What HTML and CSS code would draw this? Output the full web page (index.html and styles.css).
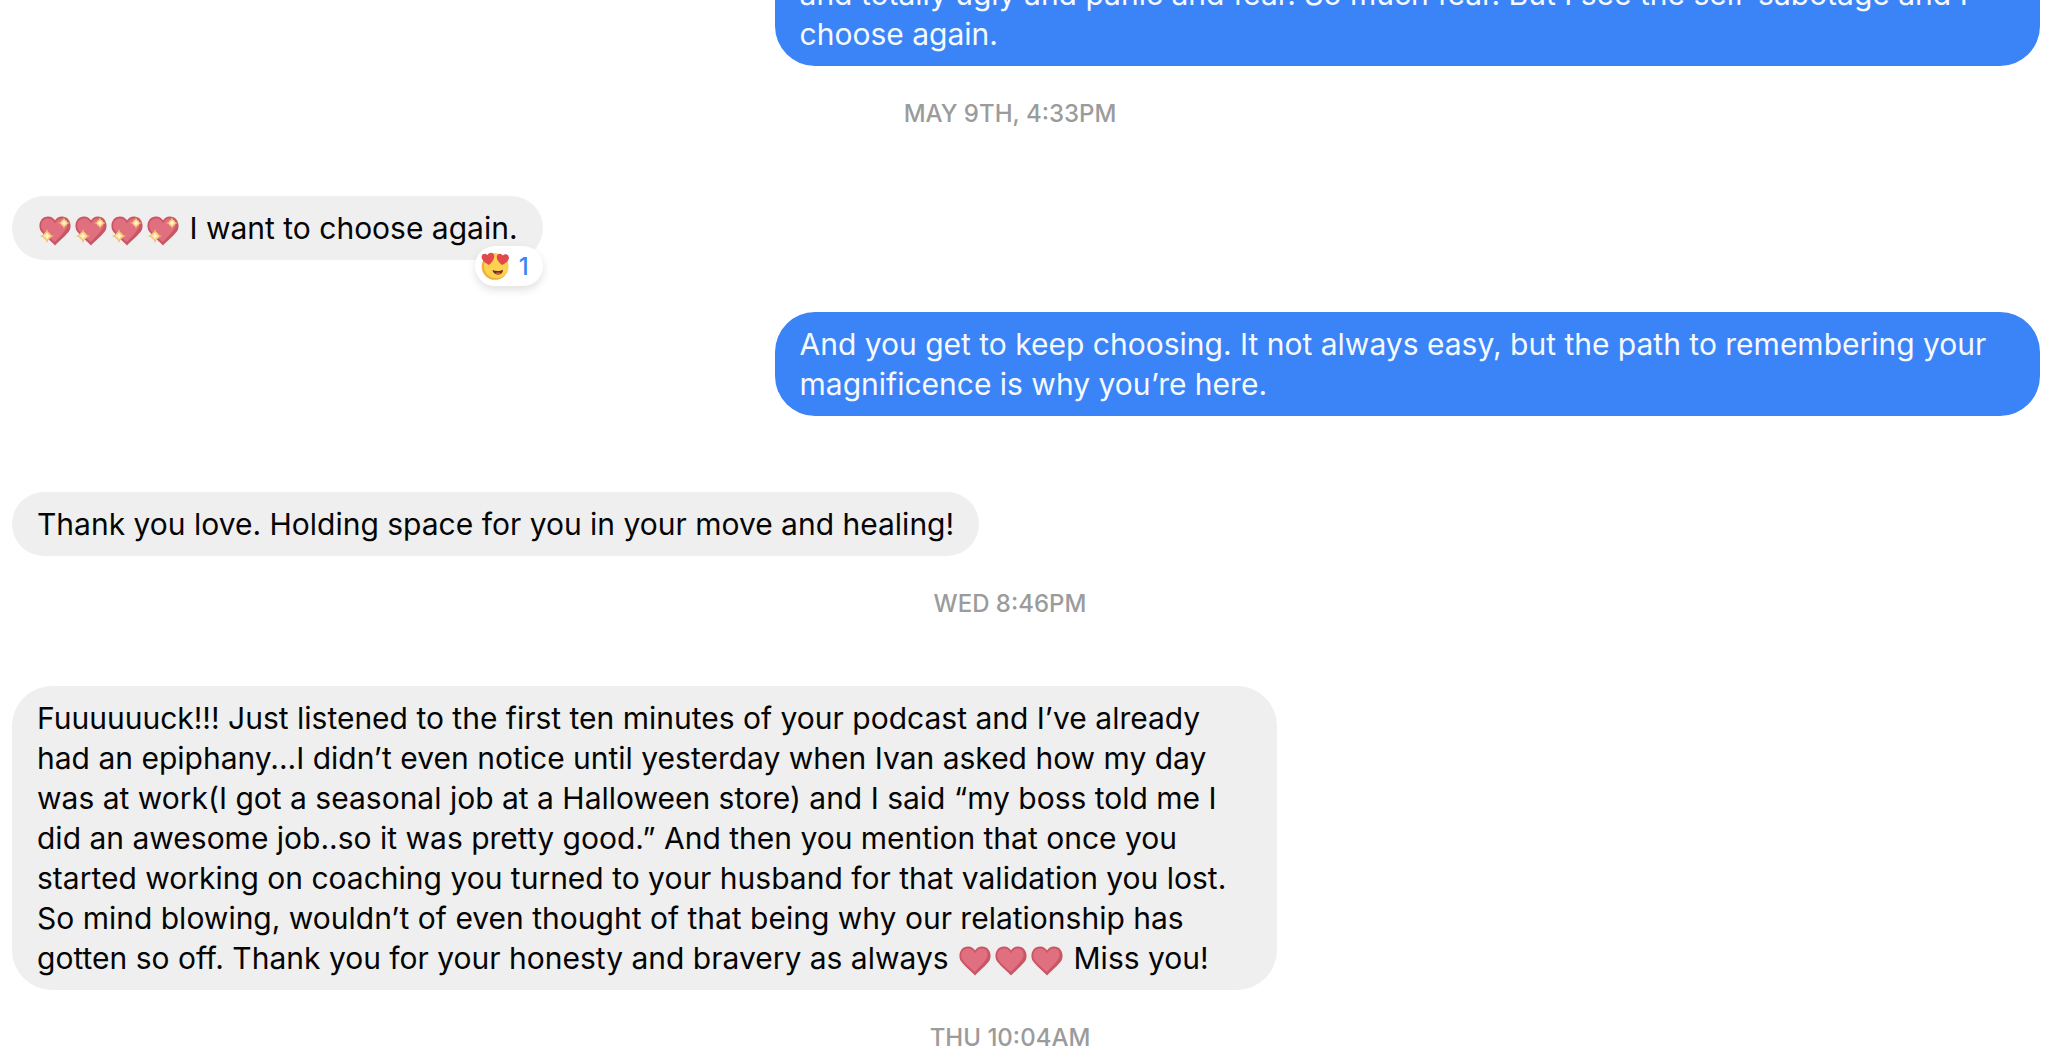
FILE: index.html
```html
<!DOCTYPE html>
<html lang="en">
<head>
    <meta charset="UTF-8">
    <meta name="viewport" content="width=device-width, initial-scale=1.0">
    <title>Messages</title>
    <link rel="stylesheet" href="styles.css">
</head>
<body>
    <!-- shared emoji shapes -->
    <svg class="sprites" aria-hidden="true">
      <symbol id="heart" viewBox="0 0 32 30">
        <path fill="#cb5565" d="M16 29.500 C14 27 3 18 1 13.500 C-1 7 2.500 .5 9 .5 C12.500 .5 15 2.500 16 4.500 C17 2.500 19.500 .5 23 .5 C29.500 .5 33 7 31 13.500 C29 18 18 27 16 29.500Z"/>
        <path fill="#e0707f" d="M16 26 C11 22 4 16 2.500 12 C1.200 7 4 3 8.500 2.600 C12.500 2.300 14.500 4.500 16 7.500 C17.500 4.500 19.500 2.300 23.500 2.600 C28 3 29.500 7.500 28 11.500 C26.500 15 20 21.500 16 26Z"/>
      </symbol>
      <symbol id="sparkle" viewBox="0 0 14 14">
        <path fill="#f3bd62" d="M7 0 C8 3.800 10.200 6 14 7 C10.200 8 8 10.200 7 14 C6 10.200 3.800 8 0 7 C3.800 6 6 3.800 7 0Z"/>
        <circle cx="7" cy="7" r="3.800" fill="#f6ca7c"/>
        <path fill="#fff3cc" d="M7 3.200 L8.200 5.800 L10.800 7 L8.200 8.200 L7 10.800 L5.800 8.200 L3.200 7 L5.800 5.800Z"/>
      </symbol>
      <symbol id="sparkling-heart" viewBox="0 0 32 30">
        <use href="#heart" width="32" height="30"/>
        <use href="#sparkle" x="19" y="1" width="12" height="12"/>
        <use href="#sparkle" x="1" y="13" width="14" height="14"/>
      </symbol>
      <symbol id="heart-eyes" viewBox="0 0 28 28">
        <circle cx="14" cy="14.500" r="13.300" fill="#f2ad3c"/>
        <circle cx="15.200" cy="14" r="12.200" fill="#fbd34e"/>
        <path fill="#e2484c" d="M8 13 C5 11.500 .5 8.500 .6 5 C.7 1.500 4.700 .5 6.300 3.200 C7.500 .2 12.500 -.4 13.200 3.500 C13.700 7 10.500 11 8 13Z"/>
        <path fill="#e2484c" d="M21 13 C18.500 11 15.300 7.500 15.800 4.500 C16.400 1 20.600 .8 21.800 3.800 C23.500 1.200 27.700 2 27.900 5.600 C28 9 24 11.700 21 13Z"/>
        <path fill="#6d2d20" d="M11.500 18 C15 19.500 19 19.300 22 17.800 C22 21 20 22.600 17 22.600 C14 22.600 12 20.800 11.500 18Z"/>
        <path fill="#e2484c" d="M14 21.300 C16 20 18.500 20 20 21 C18.500 22.800 15.700 22.900 14 21.300Z"/>
      </symbol>
    </svg>

    <main class="thread">
      <div class="message sent">
        <p class="bubble">and totally ugly and panic and fear. So much fear. But I see the self-sabotage and I choose again.</p>
      </div>

      <time class="timestamp">MAY 9TH, 4:33PM</time>

      <div class="message received">
        <p class="bubble"><svg class="emoji" role="img" aria-label="sparkling heart"><use href="#sparkling-heart"/></svg><svg class="emoji" role="img" aria-label="sparkling heart"><use href="#sparkling-heart"/></svg><svg class="emoji" role="img" aria-label="sparkling heart"><use href="#sparkling-heart"/></svg><svg class="emoji" role="img" aria-label="sparkling heart"><use href="#sparkling-heart"/></svg> I want to choose again.</p>
        <button class="reaction"><svg class="reaction-icon" role="img" aria-label="heart eyes"><use href="#heart-eyes"/></svg>1</button>
      </div>

      <div class="message sent">
        <p class="bubble">And you get to keep choosing. It not always easy, but the path to remembering your magnificence is why you’re here.</p>
      </div>

      <div class="message received">
        <p class="bubble">Thank you love. Holding space for you in your move and healing!</p>
      </div>

      <time class="timestamp">WED 8:46PM</time>

      <div class="message received">
        <p class="bubble">Fuuuuuuck!!! Just listened to the first ten minutes of your podcast and I’ve already had an epiphany...I didn’t even notice until yesterday when Ivan asked how my day was at work(I got a seasonal job at a Halloween store) and I said “my boss told me I did an awesome job..so it was pretty good.” And then you mention that once you started working on coaching you turned to your husband for that validation you lost. So mind blowing, wouldn’t of even thought of that being why our relationship has gotten so off. Thank you for your honesty and bravery as always <svg class="emoji" role="img" aria-label="heart"><use href="#heart"/></svg><svg class="emoji" role="img" aria-label="heart"><use href="#heart"/></svg><svg class="emoji" role="img" aria-label="heart"><use href="#heart"/></svg> Miss you!</p>
      </div>

      <time class="timestamp">THU 10:04AM</time>
    </main>
</body>
</html>
```
FILE: styles.css
```css
body {
    margin: 0;
    background-color: #ffffff;
    color: #050505;
    font-family: Inter, 'Liberation Sans', sans-serif;
    font-size: 30px;
    line-height: 40px;
}

.sprites {
    position: absolute;
    width: 0;
    height: 0;
}

/* newest messages stay at the bottom of the window */
.thread {
    display: flex;
    flex-direction: column;
    justify-content: flex-end;
    height: 100vh;
    padding: 0 20px 0 12px;
    box-sizing: border-box;
    overflow: hidden;
}

.message {
    position: relative;
    flex-shrink: 0;
    max-width: 62.4%;
    margin-bottom: 9px;
}

.received {
    align-self: flex-start;
    margin-top: 67px;
}

.sent {
    align-self: flex-end;
    margin-top: 43px;
}

.bubble {
    margin: 0;
    padding: 12px 25px;
    border-radius: 40px;
    background-color: #efefef;
}

.sent .bubble {
    background-color: #3b84f8;
    color: #f4faff;
}

.timestamp {
    flex-shrink: 0;
    margin: 24px 32px 0 0;
    color: #9b9b9b;
    font-size: 24px;
    font-weight: 500;
    line-height: 30px;
    text-align: center;
}

.emoji {
    width: 32px;
    height: 30px;
    margin: 0 2px;
    vertical-align: -7px;
}

.reaction {
    position: absolute;
    right: 0;
    bottom: -26px;
    display: flex;
    align-items: center;
    gap: 10px;
    height: 40px;
    padding: 0 14px 0 6px;
    border: none;
    border-radius: 20px;
    background-color: #ffffff;
    box-shadow: 0 4px 8px rgba(0, 0, 0, 0.12);
    color: #3b84f8;
    font-family: inherit;
    font-size: 24px;
    font-weight: 500;
    cursor: pointer;
}

.reaction-icon {
    width: 28px;
    height: 28px;
}
```
